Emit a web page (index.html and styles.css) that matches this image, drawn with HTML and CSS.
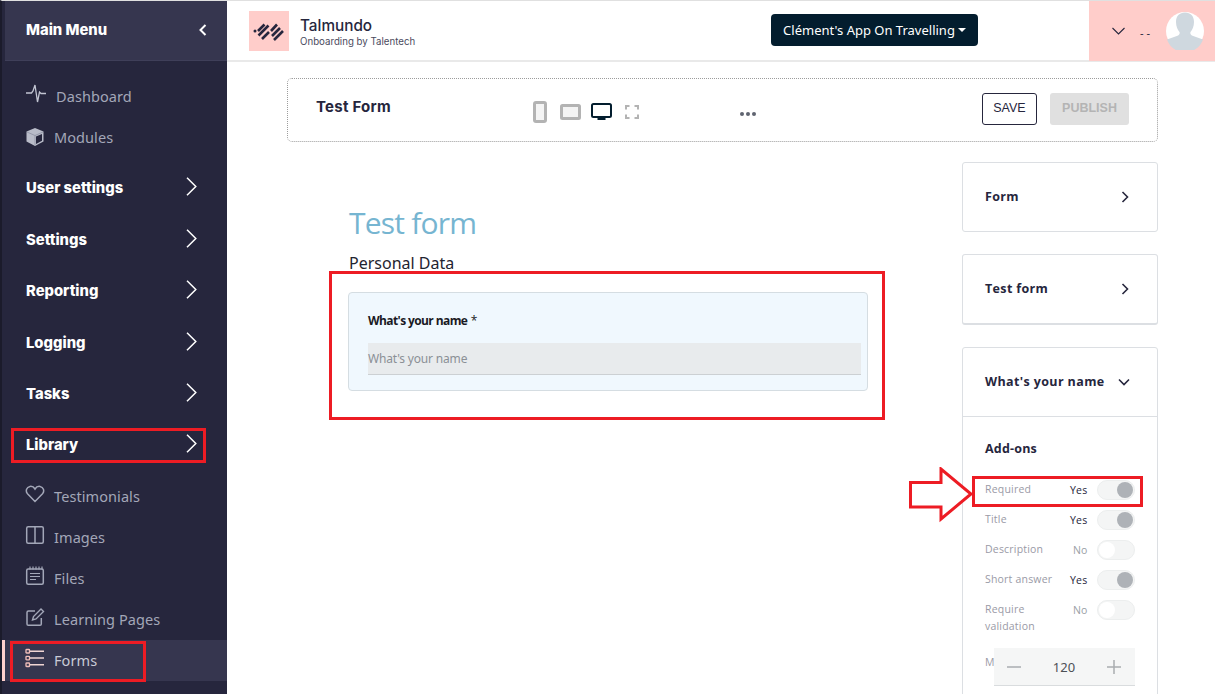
FILE: index.html
```html
<!DOCTYPE html>
<html lang="en">
<head>
<meta charset="utf-8">
<title>Test Form</title>
<link rel="stylesheet" href="styles.css">
</head>
<body>
<div class="app">
  <aside class="sidebar">
    <div class="side-head">
      <span>Main Menu</span>
      <svg class="back" width="10" height="14" viewBox="0 0 10 14"><path d="M7.5 2 L2.5 7 L7.5 12" fill="none" stroke="#fff" stroke-width="2"/></svg>
    </div>
    <nav class="side-nav">
      <a class="link link-dash"><svg class="ico" width="22" height="20" viewBox="0 0 22 20"><path d="M1 9H6.500L8 7 10 1 12.500 18 14.500 8 16 9.500H21" fill="none" stroke="#c2c5d2" stroke-width="1.300"/></svg><span>Dashboard</span></a>
      <a class="link link-cube"><svg class="ico" width="20" height="20" viewBox="0 0 20 20"><path d="M10 1 18.500 4.500V14.500L10 19 1.500 14.500V4.500Z" fill="#b9bcc9"/><path d="M11 9.500 17 7V13.700L11 17Z" fill="#26263d"/><path d="M2 5 10 8.500 18 5M10 8.500V18" fill="none" stroke="#8d90a2" stroke-width=".8"/></svg><span>Modules</span></a>
      <a class="section sec-first"><span>User settings</span><svg class="chev" width="11" height="19" viewBox="0 0 11 19"><path d="M1 .7 9.800 9.500 1 18.300" fill="none" stroke="#fff" stroke-width="1.500"/></svg></a>
      <a class="section"><span>Settings</span><svg class="chev" width="11" height="19" viewBox="0 0 11 19"><path d="M1 .7 9.800 9.500 1 18.300" fill="none" stroke="#fff" stroke-width="1.500"/></svg></a>
      <a class="section"><span>Reporting</span><svg class="chev" width="11" height="19" viewBox="0 0 11 19"><path d="M1 .7 9.800 9.500 1 18.300" fill="none" stroke="#fff" stroke-width="1.500"/></svg></a>
      <a class="section"><span>Logging</span><svg class="chev" width="11" height="19" viewBox="0 0 11 19"><path d="M1 .7 9.800 9.500 1 18.300" fill="none" stroke="#fff" stroke-width="1.500"/></svg></a>
      <a class="section"><span>Tasks</span><svg class="chev" width="11" height="19" viewBox="0 0 11 19"><path d="M1 .7 9.800 9.500 1 18.300" fill="none" stroke="#fff" stroke-width="1.500"/></svg></a>
      <a class="section sec-last"><span>Library</span><svg class="chev" width="11" height="19" viewBox="0 0 11 19"><path d="M1 .7 9.800 9.500 1 18.300" fill="none" stroke="#fff" stroke-width="1.500"/></svg></a>
      <a class="link"><svg class="ico" width="20" height="20" viewBox="0 0 20 20"><path d="M10 17.500 2.500 9.800C.2 7.200 1.500 3 5 2.400c2-.3 3.800.6 5 2.600 1.200-2 3-2.900 5-2.600 3.500.6 4.800 4.800 2.500 7.400Z" fill="none" stroke="#a3a7b8" stroke-width="1.500"/></svg><span>Testimonials</span></a>
      <a class="link"><svg class="ico" width="20" height="20" viewBox="0 0 20 20"><rect x="1.700" y="1.700" width="16.600" height="16.600" rx="1.500" fill="none" stroke="#a3a7b8" stroke-width="1.500"/><path d="M10 2v16" stroke="#a3a7b8" stroke-width="1.500"/></svg><span>Images</span></a>
      <a class="link"><svg class="ico" width="20" height="20" viewBox="0 0 20 20"><rect x="1.700" y="3" width="16.600" height="15.300" rx="1.500" fill="none" stroke="#a3a7b8" stroke-width="1.500"/><path d="M5 .5v3M8 .5v3M11 .5v3M14 .5v3M17 .5v3M5 7.500h10M5 10.500h10M5 13.500h6" stroke="#a3a7b8" stroke-width="1.200"/></svg><span>Files</span></a>
      <a class="link"><svg class="ico" width="20" height="20" viewBox="0 0 20 20"><path d="M10 4H3.500C2.500 4 2 4.500 2 5.500V17c0 .8.500 1.300 1.300 1.300H15c.8 0 1.300-.5 1.300-1.300v-6" fill="none" stroke="#a3a7b8" stroke-width="1.500"/><path d="M7.500 13 8.500 9.500 16 2l2.500 2.500L11 12Z" fill="none" stroke="#a3a7b8" stroke-width="1.400"/></svg><span>Learning Pages</span></a>
      <a class="link link-active"><svg class="ico" width="20" height="20" viewBox="0 0 20 20"><g fill="none" stroke="#f0bdb9" stroke-width="1.300"><rect x="1" y="1.500" width="3.500" height="3.500" rx=".6"/><rect x="1" y="8.300" width="3.500" height="3.500" rx=".6"/><rect x="1" y="15" width="3.500" height="3.500" rx=".6"/></g><path d="M5 3.300h14M5 10h14M5 16.800h14" stroke="#f0d5d3" stroke-width="1.400"/></svg><span>Forms</span></a>
    </nav>
  </aside>

  <div class="main">
    <header class="topbar">
      <div class="brand">
        <div class="logo"><svg width="40" height="40" viewBox="0 0 40 40"><circle cx="6" cy="20" r="1.500" fill="#26263d"/><path d="M9 20 15.500 13.500M9.500 24.500 19.500 14.500M13 28 20 21M22 20 28 13.500M23 25 31 17M25 29 34 20" stroke="#26263d" stroke-width="2.600" fill="none"/></svg></div>
        <div class="brand-text">
          <div class="brand-name">Talmundo</div>
          <div class="brand-sub">Onboarding by Talentech</div>
        </div>
      </div>
      <button class="app-btn">Clément's App On Travelling<i class="caret"></i></button>
      <div class="user">
        <svg width="13" height="8" viewBox="0 0 13 8"><path d="M.5 1 6.500 7 12.500 1" fill="none" stroke="#26263d" stroke-width="1.100"/></svg>
        <span class="user-name">- -</span>
        <div class="avatar"><svg width="38" height="38" viewBox="0 0 38 38"><circle cx="19" cy="19" r="19" fill="#fff"/><path d="M19 .5c5.500 0 9 3.500 9 9.500 0 4.500-1.800 8-3.500 10-.5 1.500 0 3 2 3.800L37 27.500A19 19 0 0 1 1 27.500L11.500 23.800c2-.8 2.500-2.300 2-3.800-1.700-2-3.500-5.500-3.500-10 0-6 3.500-9.500 9-9.500Z" fill="#cfd8df"/></svg></div>
      </div>
    </header>

    <div class="canvas">
      <section class="toolbar">
        <div class="tb-title">Test Form</div>
        <div class="devices">
          <svg class="dev-phone" width="14" height="22" viewBox="0 0 14 22"><rect x="1.500" y="1.500" width="11" height="19" rx="1.500" fill="#f4f4f4" stroke="#b3b3b3" stroke-width="3"/></svg>
          <svg class="dev-tablet" width="21" height="16" viewBox="0 0 21 16"><rect x="1.500" y="1.500" width="18" height="13" rx="1" fill="#f4f4f4" stroke="#b3b3b3" stroke-width="3"/></svg>
          <svg class="dev-desk" width="21" height="18" viewBox="0 0 21 18"><rect x="1" y="1" width="19" height="13" rx="1.500" fill="#fff" stroke="#031d2e" stroke-width="2"/><rect x="6.500" y="14" width="8" height="3" fill="#031d2e"/></svg>
          <svg class="dev-full" width="14" height="14" viewBox="0 0 14 14"><path d="M1 4.500V1H4.500M9.500 1H13V4.500M13 9.500V13H9.500M4.500 13H1V9.500" fill="none" stroke="#b3b3b3" stroke-width="2"/></svg>
        </div>
        <div class="dots"><i></i><i></i><i></i></div>
        <div class="actions">
          <button class="btn-save">SAVE</button>
          <button class="btn-publish">PUBLISH</button>
        </div>
      </section>

      <div class="workspace">
        <section class="form-area">
          <h1 class="form-title">Test form</h1>
          <p class="form-sub">Personal Data</p>
          <div class="q-card">
            <div class="q-label">What's your name <span class="star">*</span></div>
            <div class="q-input">What's your name</div>
          </div>
        </section>

        <aside class="panels">
          <div class="panel panel-closed"><span>Form</span><svg width="8" height="12" viewBox="0 0 8 12"><path d="M1.500 1 6.500 6 1.500 11" fill="none" stroke="#26263d" stroke-width="1.600"/></svg></div>
          <div class="panel panel-closed panel-2"><span>Test form</span><svg width="8" height="12" viewBox="0 0 8 12"><path d="M1.500 1 6.500 6 1.500 11" fill="none" stroke="#26263d" stroke-width="1.600"/></svg></div>
          <div class="panel panel-open">
            <div class="po-head"><span>What's your name</span><svg width="12" height="8" viewBox="0 0 12 8"><path d="M1 1.500 6 6.500 11 1.500" fill="none" stroke="#26263d" stroke-width="1.600"/></svg></div>
            <div class="po-body">
              <h3 class="addons">Add-ons</h3>
              <div class="opt"><span class="opt-name">Required</span><span class="opt-val yes">Yes</span><i class="tog on"></i></div>
              <div class="opt"><span class="opt-name">Title</span><span class="opt-val yes">Yes</span><i class="tog on"></i></div>
              <div class="opt"><span class="opt-name">Description</span><span class="opt-val">No</span><i class="tog"></i></div>
              <div class="opt"><span class="opt-name">Short answer</span><span class="opt-val yes">Yes</span><i class="tog on"></i></div>
              <div class="opt opt-tall"><span class="opt-name">Require validation</span><span class="opt-val">No</span><i class="tog"></i></div>
              <div class="max"><span class="max-label">M</span>
                <div class="stepper">
                  <svg width="14" height="14" viewBox="0 0 14 14"><path d="M0 7h14" stroke="#a9adb0" stroke-width="1.500"/></svg>
                  <span>120</span>
                  <svg width="14" height="14" viewBox="0 0 14 14"><path d="M0 7h14M7 0v14" stroke="#a9adb0" stroke-width="1.500"/></svg>
                </div>
              </div>
            </div>
          </div>
        </aside>
      </div>
    </div>
  </div>
</div>

<div class="mark mark-form"></div>
<div class="mark mark-lib"></div>
<div class="mark mark-forms"></div>
<div class="mark mark-req"></div>
<svg class="arrow" width="66" height="56" viewBox="0 0 66 56"><path d="M1.500 15.500H32V2L62 27 32 52V40H1.500Z" fill="#fff" stroke="#ed1c24" stroke-width="3"/></svg>
</body>
</html>
```
FILE: styles.css
```css
* { box-sizing: border-box; }
html, body { margin: 0; height: 694px; overflow: hidden; background: #fff; }
body { position: relative; font-family: "Noto Sans", sans-serif; color: #26263d; }
button { font-family: inherit; cursor: pointer; }

.app { display: flex; height: 694px; }

/* Sidebar */
.sidebar { width: 227px; flex: none; background: #26263d; border-left: 2px solid #1b1b2b; border-top: 1px solid #e0e0e0; overflow: hidden; }
.side-head { height: 60px; margin-left: 3px; background: #36364f; border-bottom: 1px solid #3f3f59; display: flex; align-items: center; justify-content: space-between; padding: 0 19px 2px 21px; font-family: Inter, sans-serif; font-weight: 800; font-size: 14.800px; color: #fff; }
.side-nav { display: flex; flex-direction: column; padding-top: 15px; }
.link { height: 41px; display: flex; align-items: center; gap: 9px; padding: 0 0 0 23px; font-size: 14.500px; letter-spacing: .08px; color: #a3a7b8; }
.ico { flex: none; margin-top: -5px; }
.link-dash { padding-bottom: 2px; }
.link-dash .ico { margin-top: -3px; }
.link-cube { padding-bottom: 2px; }
.link-cube .ico { margin-top: 1px; }
.link-active { background: #36364f; color: #c9cad6; border-left: 3px solid #ffd0cd; padding-left: 20px; }
.section { height: 51.400px; display: flex; align-items: center; justify-content: space-between; padding: 0 30px 0 24px; font-family: Inter, sans-serif; font-weight: 800; font-size: 14.800px; color: #fff; }
.section span { padding-top: 1px; }
.chev { margin-top: -2px; }
.sec-first { margin-top: 4.300px; }
.sec-last { margin-bottom: 5px; }

/* Main */
.main { flex: 1; min-width: 0; display: flex; flex-direction: column; }
.topbar { height: 62px; flex: none; border-top: 1px solid #e0e0e0; border-bottom: 2px solid #e9e9e9; display: flex; align-items: center; position: relative; padding-left: 22px; }
.brand { display: flex; align-items: center; gap: 11px; width: 522px; }
.logo { width: 40px; height: 40px; background: #ffcdca; }
.logo svg { display: block; }
.brand-text { padding-top: 4px; }
.brand-name { font-family: Inter, sans-serif; font-weight: 500; font-size: 15.300px; line-height: 18px; }
.brand-sub { font-family: Inter, sans-serif; font-size: 9.700px; line-height: 13px; color: #4b4b60; }
.app-btn { width: 207px; height: 32px; margin-top: -2px; background: #031d2e; color: #fff; border: 0; border-radius: 4px; font-size: 13px; padding: 0; display: flex; align-items: center; justify-content: center; white-space: nowrap; }
.caret { width: 0; height: 0; margin-left: 3px; border: 4px solid transparent; border-top-color: #fff; border-bottom: 0; }
.user { margin-left: auto; width: 126px; height: 60px; background: #ffcdca; display: flex; align-items: center; padding-left: 23px; }
.user-name { margin-left: 15px; font-size: 11px; margin-top: 3px; width: 26px; }
.avatar { width: 38px; height: 38px; }
.avatar svg { display: block; }

.canvas { flex: 1; min-height: 0; padding: 16px 57px 0 60px; }
.toolbar { height: 64px; border: 1px dotted #9c9c9c; border-radius: 5px; display: flex; align-items: center; padding: 0 28px 0 28px; position: relative; }
.tb-title { width: 216.500px; font-family: Inter, sans-serif; font-weight: 700; font-size: 15px; letter-spacing: .25px; margin-top: -8px; }
.devices { display: flex; align-items: center; width: 207px; margin-top: 3px; }
.devices svg { display: block; flex: none; }
.dev-tablet { margin-left: 13px; }
.dev-desk { margin-left: 10px; }
.dev-full { margin-left: 13px; }
.dots { display: flex; gap: 2px; width: 226px; margin-top: 8px; }
.dots i { width: 4px; height: 4px; border-radius: 50%; background: #5f6470; }
.actions { display: flex; gap: 13px; margin-left: auto; margin-top: -3px; }
.btn-save, .btn-publish { height: 32px; border-radius: 3px; font-family: "Liberation Sans", sans-serif; font-size: 12.500px; padding: 0 0 2px; }
.btn-save { width: 55px; background: #fff; border: 1px solid #26263d; color: #26263d; }
.btn-publish { width: 79px; background: #e0e0e0; border: 0; color: #b4b4b4; font-weight: 700; }

.workspace { display: flex; align-items: flex-start; justify-content: space-between; margin-top: 20px; }
.form-area { width: 520px; margin: 43px 0 0 61px; }
.form-title { margin: 0; padding-left: 1px; font-family: "Open Sans", sans-serif; font-weight: 400; font-size: 30px; line-height: 36px; color: #76b5d1; letter-spacing: -.8px; }
.form-sub { margin: 11px 0 0; padding-left: 1px; font-size: 16px; line-height: 22px; color: #1f2430; }
.q-card { margin-top: 18px; height: 99px; background: #f0f8fe; border: 1px solid #d5dde2; border-radius: 4px; padding: 19px 6px 0 19px; }
.q-label { font-family: "Open Sans", sans-serif; font-weight: 700; font-size: 12px; line-height: 17px; color: #1a1a24; letter-spacing: -.6px; }
.star { margin-left: 1px; font-weight: 400; }
.q-input { margin-top: 14px; height: 32px; background: #e8ebed; border-bottom: 1px solid #ccd0d3; font-size: 12px; line-height: 31px; color: #8b9096; letter-spacing: -.18px; }

.panels { width: 196px; flex: none; display: flex; flex-direction: column; }
.panel { border: 1px solid #dcdfe3; border-radius: 3px; background: #fff; }
.panel-closed { height: 70px; display: flex; align-items: center; justify-content: space-between; padding: 0 28px 2px 22px; font-family: "Open Sans", sans-serif; font-weight: 700; font-size: 12.500px; letter-spacing: .35px; }
.panel-closed svg { margin-top: 1px; }
.panel-2 { margin-top: 22px; height: 71px; border-bottom-width: 2px; }
.panel-open { margin-top: 22px; height: 400px; }
.po-head { height: 69px; border-bottom: 1px solid #dcdfe3; display: flex; align-items: center; justify-content: space-between; padding: 0 27px 2px 22px; font-family: "Open Sans", sans-serif; font-weight: 700; font-size: 12.500px; letter-spacing: .38px; }
.po-head svg { margin-top: 1px; }
.po-body { padding: 23px 22px 0 22px; }
.addons { margin: 0 0 23px; font-family: "Open Sans", sans-serif; font-weight: 700; font-size: 12.500px; line-height: 18px; letter-spacing: .2px; }
.opt { height: 30px; display: flex; align-items: flex-start; font-family: "Open Sans", sans-serif; font-size: 10.500px; line-height: 17px; letter-spacing: .2px; }
.opt-tall { height: 47px; }
.opt-name { width: 78px; color: #9a9aa6; }
.opt-val { width: 34px; padding-top: 1px; color: #9aa0a6; flex: none; }
.opt-val.yes { color: #26263d; padding-left: 7px; }
.opt-val:not(.yes) { padding-left: 10px; }
.tog { display: block; margin-top: -1px; width: 38px; height: 20px; flex: none; border-radius: 10px; background: #f4f5f5; border: 1px solid #eceeee; position: relative; }
.tog::after { content: ""; position: absolute; left: 1px; top: 1px; width: 16px; height: 16px; border-radius: 50%; background: #fff; }
.tog.on::after { left: auto; right: 1px; background: #aeb2b7; }
.max { display: flex; align-items: center; position: relative; margin-top: 0; height: 38px; }
.max-label { font-family: "Open Sans", sans-serif; font-size: 10.500px; color: #9a9aa6; padding-bottom: 10px; }
.stepper { position: absolute; left: 9px; top: 0; width: 141px; height: 38px; background: #f5f6f6; border-bottom: 1px solid #d9dcde; display: flex; align-items: center; justify-content: space-between; padding: 0 14px 0 13px; font-size: 13px; color: #4d5156; }
.stepper svg { display: block; }

/* Red annotations over the screenshot */
.mark { position: absolute; border: 3px solid #ed1c24; }
.mark-form { left: 329px; top: 271px; width: 556px; height: 149px; }
.mark-lib { left: 11px; top: 428px; width: 195px; height: 35px; }
.mark-forms { left: 10px; top: 641px; width: 136px; height: 41px; }
.mark-req { left: 972px; top: 476px; width: 171px; height: 31px; }
.arrow { position: absolute; left: 909px; top: 467px; }
```
